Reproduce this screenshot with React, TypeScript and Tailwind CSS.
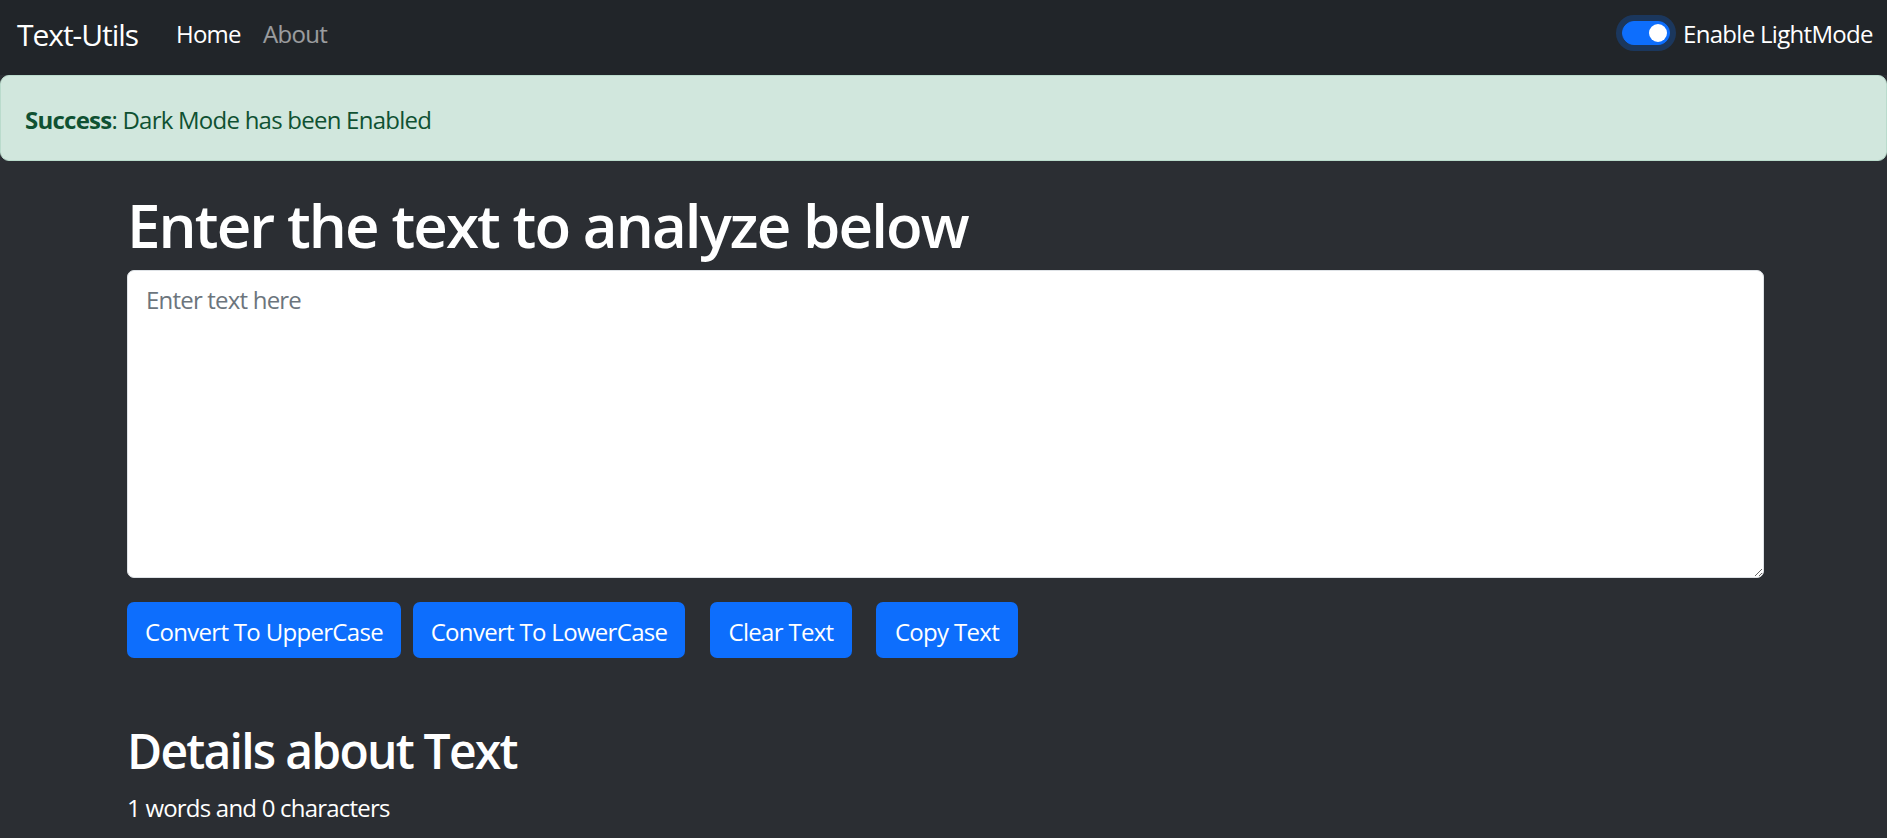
export default function App() {
  const btn =
    "flex h-[56px] items-center justify-center rounded-[7px] bg-[#0d6efd] pt-[3px] text-[24px] leading-[36px] text-white";
  return (
    <div className="min-h-[838px] bg-[#2b2e33] font-['Open_Sans','Noto_Sans',sans-serif] tracking-[-0.69px] text-white">
      <nav className="h-[75px] bg-[#212529]">
        <div className="flex h-[68px] items-center pl-[17px] pr-[12px]">
          <a className="w-[159px] text-[30px] leading-[45px] tracking-[-1.04px] text-white">Text-Utils</a>
          <a className="w-[87px] text-[24px] leading-[36px] tracking-[-0.8px] text-white">Home</a>
          <a className="text-[24px] leading-[36px] text-white/55">About</a>
          <div className="ml-auto flex items-center">
            <span className="relative mb-[3px] block h-[24px] w-[48px] rounded-full border border-[#0d6efd] bg-[#0d6efd] shadow-[0_0_0_6px_rgba(13,110,253,0.25)]">
              <span className="absolute right-[2px] top-[2px] block h-[18px] w-[18px] rounded-full bg-white" />
            </span>
            <label className="ml-[13px] w-[192px] text-[24px] leading-[36px] text-white">Enable LightMode</label>
          </div>
        </div>
      </nav>

      <div className="flex h-[86px] items-center rounded-[9px] border border-[#badbcc] bg-[#d1e7dd] px-[24px] pt-[4px] text-[24px] leading-[36px] tracking-[-0.76px] text-[#0f5132]">
        <p>
          <strong className="font-bold">Success</strong>: Dark Mode has been Enabled
        </p>
      </div>

      <main className="pl-[127px] pt-[28px]">
        <h1 className="mb-[9px] text-[60px] font-semibold leading-[72px] tracking-[-1.9px]">Enter the text to analyze below</h1>
        <textarea
          className="block h-[308px] w-[1637px] rounded-[7px] border border-[#dee2e6] bg-white px-[18px] pb-[7px] pt-[11px] text-[24px] leading-[36px] tracking-[-0.8px] text-[#212529] outline-none placeholder:text-[#6c757d]"
          placeholder="Enter text here"
        />
        <div className="mt-[24px] flex">
          <button className={`${btn} w-[274px]`}>Convert To UpperCase</button>
          <button className={`${btn} ml-[12px] w-[272px]`}>Convert To LowerCase</button>
          <button className={`${btn} ml-[25px] w-[142px]`}>Clear Text</button>
          <button className={`${btn} ml-[24px] w-[142px]`}>Copy Text</button>
        </div>
        <h2 className="mb-[10px] mt-[64px] text-[48px] font-semibold leading-[58px] tracking-[-1.76px]">Details about Text</h2>
        <p className="text-[24px] leading-[36px] tracking-[-0.79px]">1 words and 0 characters</p>
      </main>
    </div>
  );
}
